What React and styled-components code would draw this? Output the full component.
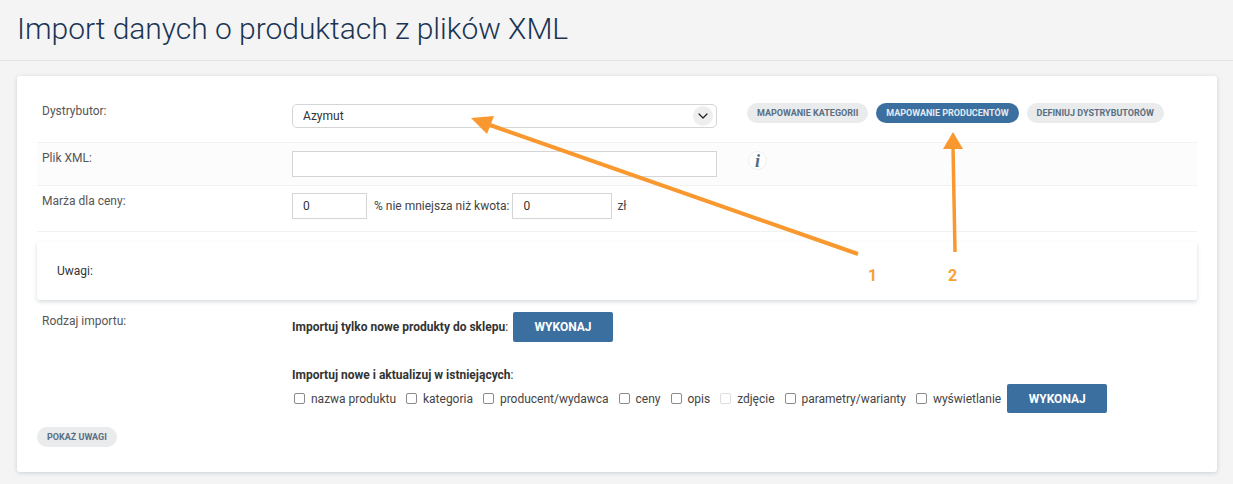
import styled, { createGlobalStyle } from "styled-components";
import { ChevronDown } from "lucide-react";

const GlobalStyle = createGlobalStyle`
html, body {
  margin: 0;
  background: #f4f4f5;
  font-family: Roboto, "Liberation Sans", sans-serif;
}
`;

const Page = styled.div`
  position: relative;
  width: 1233px;
  height: 484px;
  overflow: hidden;
`;

const Header = styled.header`
  height: 60px;
  border-bottom: 1px solid #e1e4e5;
  padding-left: 17px;
  box-sizing: content-box;
`;

const Title = styled.h1`
  margin: 0;
  padding-top: 11px;
  font-size: 30px;
  line-height: 36px;
  font-weight: 300;
  letter-spacing: -0.03px;
  color: #1b3453;
`;

const Card = styled.main`
  margin: 15px 16px 0 17px;
  height: 396px;
  box-sizing: border-box;
  padding: 20px 20px 0;
  background: #fff;
  border-radius: 3px;
  box-shadow: 0 1px 4px rgba(60, 80, 100, 0.22);
`;

const Row = styled.div`
  display: grid;
  grid-template-columns: 255px 1fr;
  height: ${p => p.$h}px;
  box-sizing: border-box;
  border-bottom: 1px solid #f0f1f2;
  background: ${p => (p.$shade ? "#fcfcfc" : "#fff")};
`;

const Label = styled.div`
  padding: ${p => p.$top || 8}px 0 0 5px;
  font-size: 12px;
  line-height: 16px;
  color: #555;
`;

const Controls = styled.div`
  display: flex;
  align-items: flex-start;
  padding-top: ${p => p.$top || 0}px;
`;

const SelectBox = styled.div`
  display: flex;
  align-items: center;
  justify-content: space-between;
  width: 425px;
  height: 24px;
  box-sizing: border-box;
  padding: 0 3px 0 10px;
  border: 1px solid #d5d5d5;
  border-radius: 5px;
  font-size: 12px;
  line-height: 20px;
  color: #333;
`;

const SelectValue = styled.span`
  margin-top: -1px;
`;

const SelectArrow = styled.span`
  display: flex;
  align-items: center;
  justify-content: center;
  width: 20px;
  height: 20px;
  border-radius: 50%;
  background: #eeeeee;
  color: #222;
`;

const TextInput = styled.input`
  width: ${p => p.$w}px;
  height: 26px;
  box-sizing: border-box;
  padding: 0 10px;
  border: 1px solid #d5d5d5;
  border-radius: 0;
  font: 12px Roboto, sans-serif;
  color: #333;
  outline: none;
`;

const Pills = styled.div`
  display: flex;
  gap: 8px;
  margin: -1px 0 0 30px;
`;

const Pill = styled.button`
  height: 20px;
  padding: 0 10px;
  border: 0;
  border-radius: 10px;
  background: ${p => (p.$active ? "#3b6f9f" : "#e9ebed")};
  color: ${p => (p.$active ? "#e4ebf2" : "#5a6f82")};
  font: 700 9px Roboto, sans-serif;
  text-transform: uppercase;
  white-space: nowrap;
`;

const InfoIcon = styled.span`
  display: flex;
  align-items: center;
  justify-content: center;
  width: 19px;
  height: 19px;
  margin: 0 0 0 31px;
  box-sizing: border-box;
  border: 1px solid #eeeeee;
  border-radius: 50%;
  background: #fff;
  color: #4d6d88;
  font: italic 700 18px/1 "Liberation Serif", serif;
`;

const InlineText = styled.span`
  font-size: 12px;
  line-height: 26px;
  color: #444;
  margin: ${p => p.$m || "0"};
`;

const NotesPanel = styled.section`
  display: flex;
  align-items: center;
  height: 58px;
  margin-top: 10px;
  padding: 0 0 0 20px;
  border-radius: 3px;
  background: #fff;
  box-shadow: 0 2px 4px rgba(60, 80, 100, 0.2);
  font-size: 12px;
  color: #333;
`;

const ImportRow = styled.div`
  display: grid;
  grid-template-columns: 255px 1fr;
  padding-top: 12px;
`;

const ImportColumn = styled.div`
  display: flex;
  flex-direction: column;
`;

const InlineRow = styled.div`
  display: flex;
  align-items: center;
`;

const Bold = styled.span`
  font-size: 12px;
  color: #333;

  & > b {
    font-weight: 700;
  }
`;

const ExecButton = styled.button`
  width: 100px;
  height: 29px;
  margin-left: ${p => p.$ml}px;
  border: 0;
  border-radius: 2px;
  background: #3b6f9f;
  color: #fff;
  font: 700 12px Roboto, sans-serif;
`;

const TopExecButton = styled(ExecButton)`
  height: 30px;
`;

const UpdateHeading = styled(Bold)`
  margin-top: 25px;
  line-height: 16px;
`;

const Options = styled.div`
  display: flex;
  align-items: center;
  margin: 1px 0 0 2px;
`;

const Option = styled.label`
  display: flex;
  align-items: center;
  margin-right: 10px;
  font-size: 12px;
  letter-spacing: -0.01px;
  color: #444;
`;

const Box = styled.input.attrs({ type: "checkbox" })`
  appearance: none;
  width: 11px;
  height: 11px;
  margin: 0 6px 0 0;
  border: 1px solid ${p => (p.$faint ? "#dddddd" : "#8a8a8a")};
  border-radius: 2px;
  background: #fff;
`;

const NotesToggle = styled(Pill)`
  display: block;
  margin-top: 14px;
`;

const Overlay = styled.svg`
  position: absolute;
  left: 0;
  top: 0;
  pointer-events: none;
`;

const Digit = styled.span`
  position: absolute;
  left: ${p => p.$x}px;
  top: 266px;
  font-size: 16px;
  line-height: 19px;
  font-weight: 700;
  color: #f9a033;
`;

const options = [
  { name: "nazwa produktu" },
  { name: "kategoria" },
  { name: "producent/wydawca" },
  { name: "ceny" },
  { name: "opis" },
  { name: "zdjęcie", faint: true },
  { name: "parametry/warianty" },
  { name: "wyświetlanie" },
];

export default function App() {
  return (
    <Page>
      <GlobalStyle />
      <Header>
        <Title>Import danych o produktach z plików XML</Title>
      </Header>
      <Card>
        <Row $h={47}>
          <Label $top={7}>Dystrybutor:</Label>
          <Controls $top={8}>
            <SelectBox>
              <SelectValue>Azymut</SelectValue>
              <SelectArrow>
                <ChevronDown size={16} strokeWidth={1.8} />
              </SelectArrow>
            </SelectBox>
            <Pills>
              <Pill>Mapowanie kategorii</Pill>
              <Pill $active>Mapowanie producentów</Pill>
              <Pill>Definiuj dystrybutorów</Pill>
            </Pills>
          </Controls>
        </Row>
        <Row $h={43} $shade>
          <Label $top={7}>Plik XML:</Label>
          <Controls $top={8}>
            <TextInput $w={425} />
            <InfoIcon>i</InfoIcon>
          </Controls>
        </Row>
        <Row $h={46}>
          <Label $top={7}>Marża dla ceny:</Label>
          <Controls $top={7}>
            <TextInput $w={75} defaultValue="0" />
            <InlineText $m="0 3px 0 7px">% nie mniejsza niż kwota:</InlineText>
            <TextInput $w={100} defaultValue="0" />
            <InlineText $m="0 0 0 5px">zł</InlineText>
          </Controls>
        </Row>
        <NotesPanel>Uwagi:</NotesPanel>
        <ImportRow>
          <Label $top={1}>Rodzaj importu:</Label>
          <ImportColumn>
            <InlineRow>
              <Bold><b>Importuj tylko nowe produkty do sklepu</b>:</Bold>
              <TopExecButton $ml={5}>WYKONAJ</TopExecButton>
            </InlineRow>
            <UpdateHeading><b>Importuj nowe i aktualizuj w istniejących</b>:</UpdateHeading>
            <Options>
              {options.map(o => (
                <Option key={o.name}>
                  <Box $faint={o.faint} />
                  {o.name}
                </Option>
              ))}
              <ExecButton $ml={-4}>WYKONAJ</ExecButton>
            </Options>
          </ImportColumn>
        </ImportRow>
        <NotesToggle>Pokaż uwagi</NotesToggle>
      </Card>
      <Overlay width="1233" height="484" viewBox="0 0 1233 484">
        <line x1="858" y1="254" x2="490" y2="125" stroke="#f9982e" strokeWidth="4" />
        <polygon points="471,118 494,116 487,134" fill="#f9982e" />
        <line x1="955" y1="252" x2="953" y2="146" stroke="#f9982e" strokeWidth="3.5" />
        <polygon points="953,132 963,149 943,149" fill="#f9982e" />
      </Overlay>
      <Digit $x={868}>1</Digit>
      <Digit $x={948}>2</Digit>
    </Page>
  );
}
